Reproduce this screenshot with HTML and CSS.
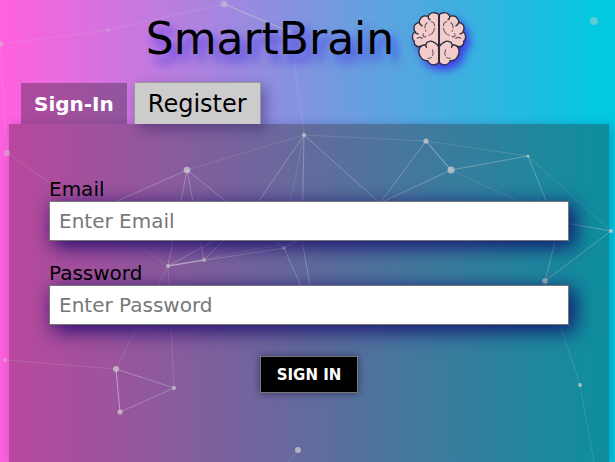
FILE: index.html
```html
<!DOCTYPE html>
<html lang="en">
<head>
<meta charset="utf-8">
<title>SmartBrain</title>
<link rel="stylesheet" href="styles.css">
</head>
<body>
<svg class="particles" viewBox="0 0 615 462" preserveAspectRatio="xMidYMin slice" aria-hidden="true">
  <g class="faint">
    <path d="M0 44L108 30L224 4M0 44L7 153M290 32L304 135L187 170M304 135L426 141M426 141L528 156L611 231M451 170L520 202M5 360L116 369L168 266M168 266L174 388M304 135L290 202M545 281L580 385L594 462M298 450L289 462M168 266L304 240M7 153L168 266"/>
  </g>
  <g class="medium">
    <path d="M304 135L258 202M304 135L302 240L310 286M304 135L380 203M187 170L108 205M187 170L168 266M187 170L204 260M187 170L284 248L301 286M168 266L284 248L304 237M168 266L230 232M204 260L228 236M380 203L426 141M380 203L451 170L528 156L558 230L545 281L611 231L560 222"/>
    <path d="M116 369L174 388L120 412"/>
  </g>
  <path class="strong" d="M224 4L290 32M426 141L451 170M116 369L120 412M168 266L204 260"/>
  <g class="dots">
    <circle cx="0" cy="44" r="3"/><circle cx="108" cy="30" r="1.5"/><circle cx="224" cy="4" r="3.5"/><circle cx="290" cy="32" r="3"/>
    <circle cx="594" cy="21" r="4"/><circle cx="7" cy="153" r="3"/><circle cx="5" cy="360" r="2"/>
  </g>
  <g class="dots bright">
    <circle cx="187" cy="170" r="3.3"/><circle cx="304" cy="135" r="2"/><circle cx="426" cy="141" r="2.6"/><circle cx="451" cy="170" r="3.5"/>
    <circle cx="528" cy="156" r="1.5"/><circle cx="611" cy="231" r="2"/><circle cx="545" cy="281" r="2.8"/><circle cx="168" cy="266" r="2"/>
    <circle cx="204" cy="260" r="2"/><circle cx="284" cy="248" r="2"/><circle cx="116" cy="369" r="3"/><circle cx="174" cy="388" r="2"/>
    <circle cx="120" cy="412" r="2.6"/><circle cx="580" cy="385" r="2"/><circle cx="298" cy="450" r="3"/>
  </g>
</svg>
<div class="page">
  <header class="header">
    <h1 class="title">SmartBrain</h1>
    <svg class="brain" viewBox="0 0 160 160" role="img" aria-label="Brain">
      <defs>
        <g id="half">
          <path class="brain-fill" d="M79 8C74 1 60 0 53 6Q49 9 48 13C38 9 28 13 24 21Q21 26 22 31C12 32 5 39 6 49Q6 54 9 58C2 63 0 71 2 79Q3 84 7 87C5 95 11 102 20 103Q25 103 27 101C19 110 19 122 25 132C29 140 38 145 47 144C50 153 59 158 68 156Q76 155 79 149Z"/>
          <path class="brain-line" d="M27 101C32 98 37 97 41 99M8 59Q12 65 18 65M22 31Q23 38 30 41M48 13Q48 19 53 23M79 103C72 91 57 83 49 88C41 90 39 99 43 105"/>
          <path class="brain-detail" d="M45 32C38 36 36 47 41 57M57 29C68 30 69 44 64 57M50 69Q60 67 63 58M15 78Q24 72 31 79M33 64V72Q38 76 42 71M60 112C67 126 59 139 47 137"/>
        </g>
      </defs>
      <use href="#half"/>
      <use href="#half" transform="matrix(-1 0 0 1 160 0)"/>
      <path class="brain-line" d="M80 8V150"/>
    </svg>
  </header>
  <nav class="tabs" aria-label="Account">
    <button class="tab tab-active" type="button">Sign-In</button>
    <button class="tab" type="button">Register</button>
  </nav>
  <main class="panel">
    <form class="form">
      <div class="field">
        <label for="email">Email</label>
        <input id="email" type="email" placeholder="Enter Email">
      </div>
      <div class="field">
        <label for="password">Password</label>
        <input id="password" type="password" placeholder="Enter Password">
      </div>
      <button class="submit" type="submit">SIGN IN</button>
    </form>
  </main>
</div>
</body>
</html>
```
FILE: styles.css
```css
* { box-sizing: border-box; }

body {
  margin: 0;
  min-height: 100vh;
  background: linear-gradient(90deg, #ff61df 1%, #03c8e0 97%);
  font-family: "DejaVu Sans", sans-serif;
  color: #000;
}

button, input { font-family: inherit; }

.particles {
  position: absolute;
  inset: 0;
  width: 100%;
  height: 100%;
  fill: none;
  stroke: #ccc;
  pointer-events: none;
}
.faint { opacity: .18; }
.medium { opacity: .4; }
.strong { opacity: .65; }
.dots { fill: #ccc; stroke: none; opacity: .45; }
.bright { opacity: .75; }

.page {
  display: flex;
  flex-direction: column;
  min-height: 100vh;
  padding: 0 6px 0 9px;
}

.header {
  position: relative;
  z-index: 1;
  display: flex;
  justify-content: center;
  align-items: center;
  gap: 18px;
  height: 82px;
  padding: 0 6px 4px 0;
}
.title {
  margin: 0;
  font-size: 44px;
  font-weight: 400;
  line-height: 52px;
  text-shadow: 6px 8px 10px rgba(64, 40, 230, .75);
}
.brain {
  width: 54px;
  height: 54px;
  overflow: visible;
  filter: drop-shadow(4px 5px 4px rgba(64, 40, 230, .85));
}
.brain-fill { fill: #f4cccb; }
.brain-fill, .brain-line, .brain-detail {
  stroke: #2d2d3d;
  stroke-width: 4;
  stroke-linecap: round;
  stroke-linejoin: round;
}
.brain-line, .brain-detail { fill: none; }
.brain-detail { stroke-width: 3; stroke-dasharray: 17 7; opacity: .75; }

.tabs {
  position: relative;
  z-index: 1;
  display: flex;
  align-items: flex-end;
  gap: 7px;
  padding-left: 12px;
}
.tab {
  height: 42px;
  padding: 0 13px;
  border: 1px solid #999;
  border-bottom: 0;
  background: #ccc;
  box-shadow: 5px 5px 12px rgba(30, 20, 80, .4);
  color: #000;
  font-size: 24px;
}
.tab-active {
  height: 41px;
  border: 0;
  background: rgba(20, 20, 20, .32);
  box-shadow: none;
  color: #fff;
  font-size: 20px;
  font-weight: 700;
}

.panel {
  flex: 1;
  padding: 53px 40px;
  background: rgba(40, 20, 20, .32);
  box-shadow: 2px 2px 10px rgba(20, 20, 100, .25);
}
.form {
  position: relative;
  z-index: 1;
  display: flex;
  flex-direction: column;
  gap: 20px;
}
.field { display: flex; flex-direction: column; }
.field label {
  position: relative;
  z-index: 1;
  align-self: flex-start;
  font-size: 20px;
  line-height: 24px;
}
.field input {
  width: 100%;
  height: 40px;
  padding: 0 9px;
  border: 1px solid #777;
  border-radius: 0;
  background: #fff;
  box-shadow: 5px 5px 20px 1px rgba(14, 0, 100, .85);
  font-size: 20px;
}
.field input::placeholder { color: #777; opacity: 1; }

.submit {
  align-self: center;
  height: 37px;
  margin-top: 11px;
  padding: 0 16px;
  border: 1px solid #777;
  background: #000;
  box-shadow: 0 0 8px rgba(20, 20, 60, .6);
  color: #fff;
  font-size: 15px;
  font-weight: 700;
}
```
